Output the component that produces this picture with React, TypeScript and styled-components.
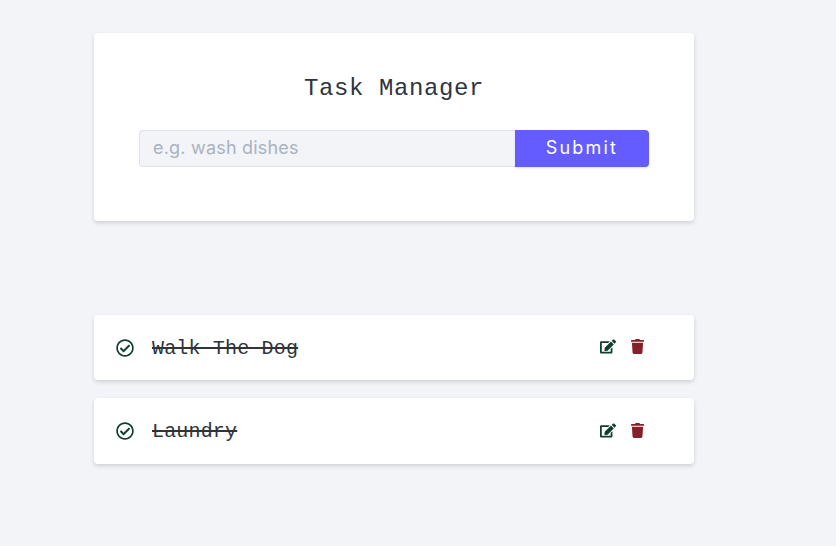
import styled, { createGlobalStyle } from "styled-components";
import { FaEdit, FaTrash, FaRegCheckCircle } from "react-icons/fa";

const GlobalStyle = createGlobalStyle`
  * {
    box-sizing: border-box;
  }
  body {
    margin: 0;
    background: #f2f4f8;
    font-family: "Inter", sans-serif;
  }
`;

const Page = styled.main`
  width: 836px;
  height: 546px;
  padding: 33px 0 0 94px;
  overflow: hidden;
`;

const FormCard = styled.form`
  width: 600px;
  height: 188px;
  padding: 39px 45px 0;
  margin-bottom: 94px;
  background: #ffffff;
  border-radius: 4px;
  box-shadow: 0 2px 4px rgba(0, 0, 0, 0.15);
`;

const Title = styled.h1`
  margin: 0 0 24px;
  font-family: "Liberation Mono", monospace;
  font-size: 24px;
  line-height: 34px;
  font-weight: 400;
  letter-spacing: 0.6px;
  text-align: center;
  color: #2d3540;
`;

const FormRow = styled.div`
  display: flex;
  height: 37px;
`;

const TaskInput = styled.input`
  width: 376px;
  height: 100%;
  padding: 0 13px 3px;
  background: #f2f4f8;
  border: 1px solid #dde2ee;
  border-right: none;
  border-radius: 4px 0 0 4px;
  font-family: "Inter", sans-serif;
  font-size: 18px;
  letter-spacing: 0.2px;
  color: #2d3540;

  &::placeholder {
    color: #aab2c0;
    opacity: 1;
  }
`;

const SubmitButton = styled.button`
  width: 134px;
  height: 100%;
  padding: 0 0 2px;
  background: #645cff;
  border: none;
  border-radius: 0 4px 4px 0;
  box-shadow: 0 1px 2px rgba(0, 0, 0, 0.12);
  font-family: "Inter", sans-serif;
  font-size: 18px;
  letter-spacing: 2.2px;
  color: #ffffff;
`;

const TaskList = styled.ul`
  display: flex;
  flex-direction: column;
  gap: 18px;
  width: 600px;
  margin: 0;
  padding: 0;
  list-style: none;
`;

const TaskItem = styled.li<{ $tall?: boolean }>`
  display: flex;
  align-items: center;
  height: ${(props) => (props.$tall ? "66px" : "65px")};
  padding: 0 0 0 22px;
  background: #ffffff;
  border-radius: 4px;
  box-shadow: 0 2px 4px rgba(0, 0, 0, 0.15);
`;

const DoneIcon = styled(FaRegCheckCircle)`
  width: 18px;
  height: 18px;
  margin-right: 18px;
  color: #0f3d2e;
`;

const TaskName = styled.span`
  flex: 1;
  padding-top: 1px;
  font-family: "Liberation Mono", monospace;
  font-size: 20px;
  letter-spacing: 0.17px;
  color: #2d3540;
  text-decoration: line-through;
  text-decoration-thickness: 2px;
  text-decoration-color: #333333;
`;

const Actions = styled.div`
  display: flex;
  align-items: center;
  gap: 15px;
  width: 94px;
  margin-top: -2px;
`;

const EditIcon = styled(FaEdit)`
  width: 16px;
  height: 15px;
  color: #0f3d2e;
`;

const DeleteIcon = styled(FaTrash)`
  width: 13px;
  height: 15px;
  color: #842029;
`;

const tasks = ["Walk The Dog", "Laundry"];

export default function App() {
  return (
    <Page>
      <GlobalStyle />
      <FormCard onSubmit={(e) => e.preventDefault()}>
        <Title>Task Manager</Title>
        <FormRow>
          <TaskInput type="text" placeholder="e.g. wash dishes" />
          <SubmitButton type="submit">Submit</SubmitButton>
        </FormRow>
      </FormCard>
      <TaskList>
        {tasks.map((task, i) => (
          <TaskItem key={task} $tall={i === 1}>
            <DoneIcon />
            <TaskName>{task}</TaskName>
            <Actions>
              <EditIcon />
              <DeleteIcon />
            </Actions>
          </TaskItem>
        ))}
      </TaskList>
    </Page>
  );
}
